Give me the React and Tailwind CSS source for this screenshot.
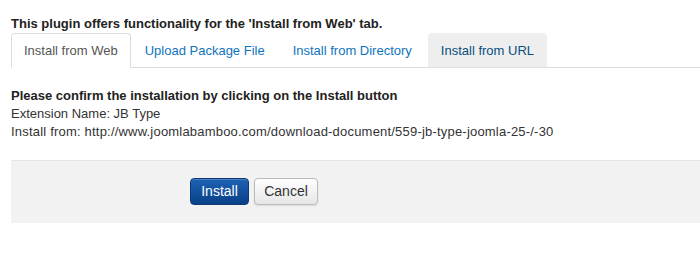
import React from "react";

const tabs = [
  { label: "Install from Web", active: true },
  { label: "Upload Package File" },
  { label: "Install from Directory" },
  { label: "Install from URL", hover: true },
];

export default function App() {
  return (
    <div className="w-[700px] h-[263px] bg-white font-['Liberation_Sans',Arial,sans-serif] text-[13px] text-[#333] overflow-hidden">
      <div className="pl-[11px] pt-[15px]">
        <div className="font-bold text-[#222] leading-[18px]">
          This plugin offers functionality for the 'Install from Web' tab.
        </div>

        <div className="flex border-b border-[#ddd] h-[35px]">
          {tabs.map((t) =>
            t.active ? (
              <div
                key={t.label}
                className="-mb-px flex items-center rounded-t-[4px] border border-[#ddd] border-b-white bg-white px-[12px] pt-[1px] text-[#555]"
              >
                {t.label}
              </div>
            ) : (
              <div
                key={t.label}
                className={
                  t.hover
                    ? "ml-[2px] flex items-center rounded-t-[4px] bg-[#eee] px-[13px] pt-[1px] text-[#0a4e7e]"
                    : "flex items-center px-[14px] pt-[1px] text-[#0f74bd]"
                }
              >
                {t.label}
              </div>
            )
          )}
        </div>

        <div className="pt-[19px] leading-[18px]">
          <div className="font-bold text-[#222]">
            Please confirm the installation by clicking on the Install button
          </div>
          <div>Extension Name: JB Type</div>
          <div className="tracking-[0.2px]">
            Install from: http://www.joomlabamboo.com/download-document/559-jb-type-joomla-25-/-30
          </div>
        </div>

        <div className="mt-[19px] h-[63px] border-t border-[#e5e5e5] bg-[#f2f2f2] pl-[179px] pt-[17px] flex gap-[5px] items-start">
          <button className="h-[27px] w-[59px] rounded-[4px] border border-[#0b3a75] bg-gradient-to-b from-[#1c62b3] to-[#0a4089] text-white text-[14px] shadow-[inset_0_1px_0_rgba(255,255,255,0.2)]">
            Install
          </button>
          <button className="h-[27px] w-[64px] rounded-[4px] border border-[#bbb] bg-gradient-to-b from-white to-[#e6e6e6] text-[#333] text-[14px] shadow-[0_1px_2px_rgba(0,0,0,0.1)]">
            Cancel
          </button>
        </div>
      </div>
    </div>
  );
}
